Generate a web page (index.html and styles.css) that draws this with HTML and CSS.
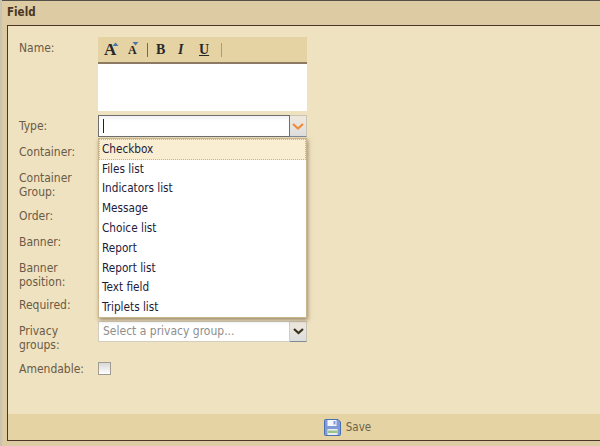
FILE: index.html
```html
<!DOCTYPE html>
<html lang="en">
<head>
  <meta charset="UTF-8" />
  <title>Field</title>
  <link rel="stylesheet" href="styles.css">
</head>
<body>
  <div class="window">
    <div class="title">Field</div>
    <div class="panel">
      <div class="form">
        <div class="row row-name">
          <label class="lbl">Name:</label>
          <div class="field">
            <div class="toolbar">
              <span class="tool tool-grow">A<svg class="arr" width="7" height="4" viewBox="0 0 7 4"><path d="M0.5 4L3.5 0.5L6.5 4Z" fill="#4a74b0"/></svg></span>
              <span class="tool tool-shrink">A<svg class="arr" width="7" height="4" viewBox="0 0 7 4"><path d="M0.5 0L3.5 3.5L6.5 0Z" fill="#4a74b0"/></svg></span>
              <span class="sep"></span>
              <span class="tool tool-b">B</span>
              <span class="tool tool-i">I</span>
              <span class="tool tool-u">U</span>
              <span class="sep sep-light"></span>
            </div>
            <div class="editor"></div>
          </div>
        </div>

        <div class="row row-type">
          <label class="lbl">Type:</label>
          <div class="field">
            <div class="combo combo-open">
              <div class="combo-input"><span class="caret"></span></div>
              <div class="combo-btn">
                <svg width="12" height="7" viewBox="0 0 12 7"><path d="M1 1L6 5.5L11 1" fill="none" stroke="#f08a3c" stroke-width="2.2"/></svg>
              </div>
            </div>
            <ul class="dropdown">
              <li class="active">Checkbox</li>
              <li>Files list</li>
              <li>Indicators list</li>
              <li>Message</li>
              <li>Choice list</li>
              <li>Report</li>
              <li>Report list</li>
              <li>Text field</li>
              <li>Triplets list</li>
            </ul>
          </div>
        </div>

        <div class="row row-container"><label class="lbl">Container:</label></div>
        <div class="row row-group"><label class="lbl">Container Group:</label></div>
        <div class="row row-order"><label class="lbl">Order:</label></div>
        <div class="row row-banner"><label class="lbl">Banner:</label></div>
        <div class="row row-position"><label class="lbl">Banner position:</label></div>
        <div class="row row-required"><label class="lbl">Required:</label></div>

        <div class="row row-privacy">
          <label class="lbl">Privacy groups:</label>
          <div class="field field-up">
            <div class="combo">
              <div class="combo-input placeholder">Select a privacy group...</div>
              <div class="combo-btn">
                <svg width="11" height="7" viewBox="0 0 11 7"><path d="M1 1L5.5 5L10 1" fill="none" stroke="#3a3020" stroke-width="2.2"/></svg>
              </div>
            </div>
          </div>
        </div>

        <div class="row row-amend">
          <label class="lbl">Amendable:</label>
          <div class="field"><span class="check"></span></div>
        </div>
      </div>

      <div class="footer">
        <svg class="save-icon" width="17" height="17" viewBox="0 0 17 17">
          <path d="M0.5 1.5Q0.5 0.5 1.5 0.5H14L16.5 3V15.5Q16.5 16.5 15.5 16.5H1.5Q0.5 16.5 0.5 15.5Z" fill="#7f9ad6" stroke="#4a6fae"/>
          <rect x="3.5" y="1" width="9" height="6" fill="#f4f6fb"/>
          <rect x="9.5" y="2" width="2" height="3.5" fill="#7f9ad6"/>
          <rect x="3.5" y="10" width="10" height="6" fill="#e8eef0"/>
          <rect x="4" y="11.5" width="9" height="2.5" fill="#9cc48a"/>
        </svg>
        <span class="save-label">Save</span>
      </div>
    </div>
  </div>
</body>
</html>
```

FILE: styles.css
```css
* {
  box-sizing: border-box;
}

html, body {
  margin: 0;
  padding: 0;
  height: 100%;
  overflow: hidden;
}

body {
  font-family: 'DejaVu Sans Condensed', 'DejaVu Sans', Verdana, sans-serif;
  font-size: 12px;
  background: #c9c4b2;
  color: #6b5a45;
}

.window {
  height: 446px;
  margin-left: 2px;
  background: #dccba3;
  border-top: 1px solid #55504a;
  padding-bottom: 5px;
  display: flex;
  flex-direction: column;
}

.title {
  height: 24px;
  padding-left: 5px;
  line-height: 23px;
  font-weight: bold;
  font-size: 11.5px;
  color: #4a3524;
}

.panel {
  flex: 1;
  margin-left: 5px;
  background: #efe2c1;
  border-top: 1px solid #4d3428;
  border-left: 1px solid #4d3428;
  border-bottom: 1px solid #4d3428;
  display: flex;
  flex-direction: column;
}

.form {
  flex: 1;
  padding: 11px 0 0 11px;
}

.row {
  display: flex;
  align-items: flex-start;
}

.lbl {
  width: 79px;
  flex: none;
  line-height: 14px;
  padding-right: 8px;
}

.field {
  width: 209px;
  position: relative;
}

.field-up {
  margin-top: -3px;
}

/* rows */
.row-name { height: 78px; }
.row-name .lbl { padding-top: 4px; }

.row-type { height: 25px; }
.row-type .lbl { padding-top: 4px; }

.row-container { height: 26px; padding-top: 5px; }
.row-group { height: 38px; padding-top: 5px; }
.row-order { height: 26px; padding-top: 5px; }
.row-banner { height: 26px; padding-top: 5px; }
.row-position { height: 37px; padding-top: 5px; }
.row-required { height: 26px; padding-top: 5px; }
.row-privacy { height: 40px; padding-top: 5px; }
.row-amend { height: 20px; padding-top: 3px; }

/* name editor */
.toolbar {
  height: 27px;
  background: #e6d3a4;
  border-bottom: 2px solid #8d7a62;
  display: flex;
  align-items: center;
  font-family: 'Liberation Serif', serif;
  font-weight: bold;
  color: #26282c;
}

.tool {
  position: relative;
  display: block;
  line-height: 16px;
}

.arr {
  position: absolute;
  top: 0;
  right: -3px;
}

.tool-grow { font-size: 17px; margin-left: 6px; width: 12px; }
.tool-shrink { font-size: 12px; margin-left: 12px; width: 8px; }
.tool-b { font-size: 14px; width: 10px; }
.tool-i { font-size: 14px; font-style: italic; margin-left: 12px; width: 8px; }
.tool-u { font-size: 14px; text-decoration: underline; margin-left: 13px; width: 11px; }

.sep {
  width: 1px;
  height: 14px;
  background: #6d6a62;
  margin: 0 8px 0 11px;
}

.sep-light {
  background: #a99c80;
  margin-left: 11px;
}

.editor {
  height: 47px;
  background: #fff;
}

/* combos */
.combo {
  display: flex;
  height: 22px;
}

.combo-input {
  flex: 1;
  background: #fff;
  border: 1px solid #d3cdbd;
  padding-left: 4px;
  line-height: 19px;
}

.combo-open .combo-input {
  border: 1px solid #6f6f6f;
  background: linear-gradient(#f1f1f1, #fff 5px);
}

.caret {
  display: block;
  width: 1px;
  height: 14px;
  margin-top: 3px;
  background: #222;
}

.placeholder {
  color: #8e8e8e;
}

.combo-btn {
  width: 17px;
  flex: none;
  background: linear-gradient(#efe9dc, #dedede);
  border: 1px solid #c9c3b4;
  border-left: none;
  border-bottom-color: #7f8a99;
  display: flex;
  align-items: center;
  justify-content: center;
}

.row-privacy .combo {
  height: 21px;
}

.dropdown {
  position: absolute;
  top: 23px;
  left: 0;
  width: 209px;
  height: 180px;
  margin: 0;
  padding: 0;
  list-style: none;
  font-size: 11.7px;
  background: #fff;
  border: 1px solid #c8b58c;
  box-shadow: 1px 2px 4px rgba(90, 70, 40, 0.55);
  color: #1e2038;
  z-index: 10;
}

.dropdown li {
  height: 19.8px;
  line-height: 19px;
  padding-left: 3px;
}

.dropdown li.active {
  height: 20.6px;
  background: #faeed2;
  border: 1px dotted #c8b58c;
  padding-left: 2px;
  line-height: 18px;
}

/* checkbox */
.check {
  display: block;
  width: 13px;
  height: 13px;
  background: linear-gradient(#d8d8d8, #fff);
  border: 1px solid #a09c92;
}

/* footer */
.footer {
  height: 26px;
  background: #e5d3a4;
  display: flex;
  align-items: center;
  justify-content: center;
  gap: 5px;
  padding-left: 87px;
}

.save-label {
  color: #6e6248;
  font-size: 11.5px;
}
```
